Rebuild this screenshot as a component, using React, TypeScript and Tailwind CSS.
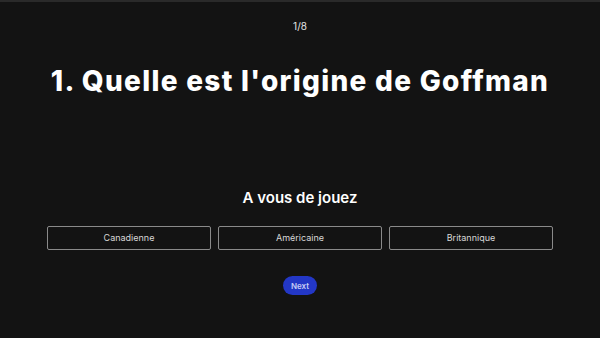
import React from 'react';

const answers = ['Canadienne', 'Américaine', 'Britannique'];

export default function App() {
  return (
    <div
      className="w-[600px] h-[338px] bg-[#131313] border-t-2 border-[#2a2a2a] flex flex-col items-center text-white"
      style={{ fontFamily: 'Inter, "Noto Sans", sans-serif' }}
    >
      <p className="mt-[17px] text-[10px] leading-[14px] text-[#e5e5e5]">1/8</p>

      <h1 className="mt-[30px] text-[28px] leading-[36px] font-extrabold tracking-[1.3px]">
        1. Quelle est l'origine de Goffman
      </h1>

      <h2 className="mt-[89px] text-[15px] leading-[20px] font-semibold">A vous de jouez</h2>

      <div className="mt-[18px] w-full px-[47px] grid grid-cols-3 gap-[7px]">
        {answers.map((a) => (
          <button
            key={a}
            className="h-[24px] border border-[#8a8a8a] rounded-[2px] text-[9px] text-[#d8d8d8]"
          >
            {a}
          </button>
        ))}
      </div>

      <button className="mt-[26px] w-[34px] h-[19px] rounded-full bg-[#2337c6] text-[8px] font-semibold text-[#c7ccf5]">
        Next
      </button>
    </div>
  );
}
